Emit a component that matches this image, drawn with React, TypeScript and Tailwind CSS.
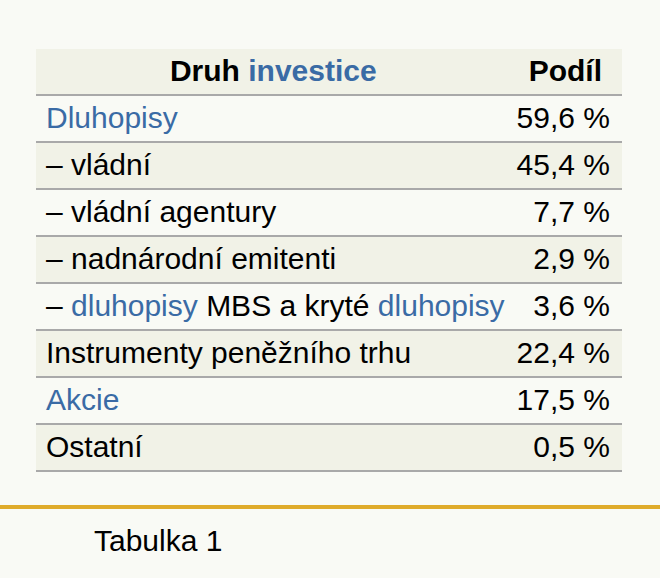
import React from "react";

const L = "text-[#3a6ba5]";

type Row = { label: React.ReactNode; value: string; shaded: boolean };

const rows: Row[] = [
  { label: <span className={L}>Dluhopisy</span>, value: "59,6 %", shaded: false },
  { label: "– vládní", value: "45,4 %", shaded: true },
  { label: "– vládní agentury", value: "7,7 %", shaded: false },
  { label: "– nadnárodní emitenti", value: "2,9 %", shaded: true },
  {
    label: (
      <>
        – <span className={L}>dluhopisy</span> MBS a kryté <span className={L}>dluhopisy</span>
      </>
    ),
    value: "3,6 %",
    shaded: false,
  },
  { label: "Instrumenty peněžního trhu", value: "22,4 %", shaded: true },
  { label: <span className={L}>Akcie</span>, value: "17,5 %", shaded: false },
  { label: "Ostatní", value: "0,5 %", shaded: true },
];

export default function App() {
  return (
    <div
      className="w-[660px] h-[578px] bg-[#f9faf5] text-black text-[30px] overflow-hidden"
      style={{ fontFamily: '"Liberation Sans", Arial, sans-serif' }}
    >
      <div className="pt-[49px] pl-[36px]">
        <table className="w-[586px] border-collapse">
          <thead>
            <tr className="bg-[#f1f2e7] border-b-2 border-[#a9a9a9]">
              <th className="w-[478px] h-[45px] p-0 pl-[10px] pr-[10px] text-center font-bold leading-[33px] pt-[5px] pb-[7px]">
                Druh <span className={L}>investice</span>
              </th>
              <th className="h-[45px] p-0 pl-[10px] pr-[20px] text-right font-bold leading-[33px] pt-[5px] pb-[7px]">
                Podíl
              </th>
            </tr>
          </thead>
          <tbody>
            {rows.map((r, i) => (
              <tr
                key={i}
                className={`border-b-2 border-[#a9a9a9] ${r.shaded ? "bg-[#f1f2e7]" : "bg-[#f9faf5]"}`}
              >
                <td className="h-[45px] p-0 pl-[10px] pr-[6px] leading-[33px] pt-[5px] pb-[7px] whitespace-nowrap">
                  {r.label}
                </td>
                <td className="h-[45px] p-0 pl-[6px] pr-[12px] text-right leading-[33px] pt-[5px] pb-[7px] whitespace-nowrap">
                  {r.value}
                </td>
              </tr>
            ))}
          </tbody>
        </table>
      </div>
      <div className="mt-[33px] h-[4px] bg-[#dfab2a]" />
      <div className="pl-[94px] pt-[15px] leading-[33px]">Tabulka 1</div>
    </div>
  );
}
